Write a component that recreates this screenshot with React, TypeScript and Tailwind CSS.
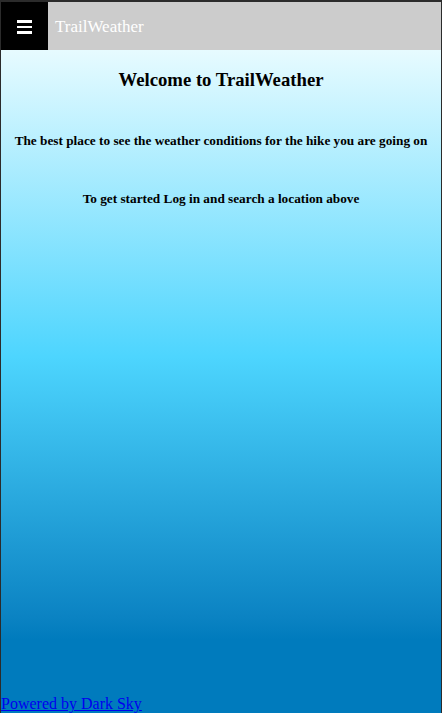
import React from "react";

export default function App() {
  return (
    <div className="h-[713px] w-[442px] flex flex-col border-t-2 border-l border-r border-[#2b2b2b] bg-[#007bbd] font-['Liberation_Serif',serif] overflow-hidden">
      {/* Top bar */}
      <div className="h-12 flex shrink-0 bg-[#cccccc]">
        <button className="w-12 h-12 bg-black flex flex-col items-center justify-center gap-[3px] -ml-px pt-[2px]">
          <span className="block w-[15px] h-[2.5px] bg-white" />
          <span className="block w-[15px] h-[2.5px] bg-white" />
          <span className="block w-[15px] h-[2.5px] bg-white" />
        </button>
        <span className="ml-[7px] flex items-center text-white text-[17px] pt-[2px]">TrailWeather</span>
      </div>

      {/* Body */}
      <div className="flex-1 flex flex-col">
        <div className="h-[590px] shrink-0 bg-[linear-gradient(to_bottom,#e7fbff_0%,#4dd5fe_52%,#0b83c3_96%,#007bbd_100%)] text-center text-black">
          <h3 className="mt-[19px] text-[18.72px] font-bold leading-[22px]">Welcome to TrailWeather</h3>
          <h4 className="mt-[42px] text-[13.28px] font-bold leading-[15px]">
            The best place to see the weather conditions for the hike you are going on
          </h4>
          <h4 className="mt-[43px] text-[13.28px] font-bold leading-[15px]">
            To get started Log in and search a location above
          </h4>
        </div>
        <div className="flex-1 flex flex-col justify-end">
          <a href="#" className="text-[16px] leading-[18px] text-[#0000ee] underline self-start">
            Powered by Dark Sky
          </a>
        </div>
      </div>
    </div>
  );
}
